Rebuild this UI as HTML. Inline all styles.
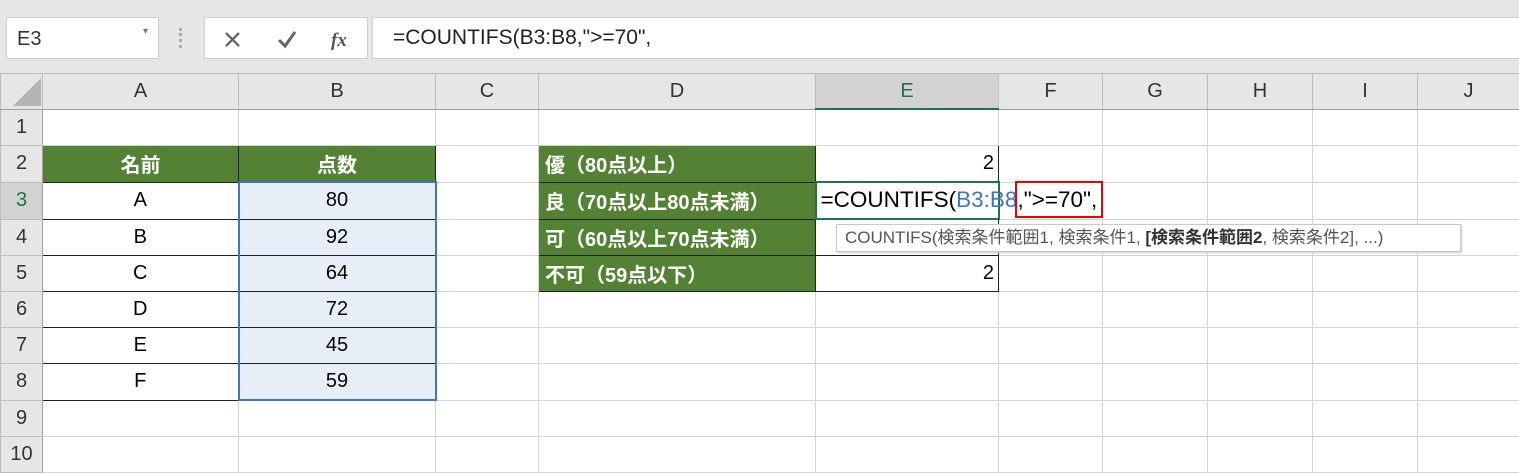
<!DOCTYPE html>
<html><head><meta charset="utf-8"><style>
body{margin:0;width:1519px;height:470px;overflow:hidden;background:#fff;font-family:"Liberation Sans","Noto Sans CJK JP",sans-serif;position:relative}
.tb{position:absolute;left:0;top:0;width:1519px;height:74px;background:#e6e6e6}
.box{position:absolute;background:#fff;border:1px solid #d0d0d0;box-sizing:border-box}
table{position:absolute;left:0;top:73px;border-collapse:collapse;table-layout:fixed;width:1519px}
td{border:1px solid #d4d4d4;height:35px;padding:0;font-size:20px;text-align:center;overflow:visible;white-space:nowrap;position:relative}
tr.h td{background:#e6e6e6;color:#333;border-color:#bdbdbd;border-bottom:1px solid #a0a0a0;height:34px}
td.r{background:#e6e6e6;color:#333;border-color:#bdbdbd;border-right:1px solid #a0a0a0}
.g{background:#548235;color:#fff;font-weight:bold;border:1px solid #222}
.gl{text-align:left;padding-left:6px}
.bl{border:1px solid #222}
.s{background:#e8eef8;border-left:2px solid #4472c4;border-right:2px solid #4472c4;border-bottom:1px solid #222}
</style></head><body>
<div class="tb"></div>
<div class="box" style="left:6px;top:17px;width:153px;height:42px;font-size:20px;color:#333;padding:10px 0 0 10px">E3<span style="position:absolute;right:10px;top:8px;font-size:10px;color:#777">▾</span></div>
<div style="position:absolute;left:179px;top:28px;width:0;height:20px;border-left:3px dotted #aaa"></div>
<div class="box" style="left:204px;top:17px;width:164px;height:42px">
<svg width="164" height="42" style="position:absolute;left:0;top:0"><path d="M21 15 L34 28 M34 15 L21 28" stroke="#666" stroke-width="2.3"/><path d="M74 22 L80 28 L90 14" stroke="#666" stroke-width="3" fill="none"/><text x="126" y="28" font-family="Liberation Serif" font-style="italic" font-weight="bold" font-size="19" fill="#555">fx</text></svg></div>
<div class="box" style="left:372px;top:17px;width:1160px;height:42px;font-size:21px;color:#222;padding:8px 0 0 20px">=COUNTIFS(B3:B8,"&gt;=70",</div>
<table>
<colgroup><col style="width:42px"><col style="width:196px"><col style="width:197px"><col style="width:103px"><col style="width:277px"><col style="width:183px"><col style="width:104px"><col style="width:105px"><col style="width:105px"><col style="width:105px"><col style="width:102px"></colgroup>
<tr class="h"><td><svg width="30" height="30" style="display:block;margin-left:10px"><path d="M30 2 L30 30 L2 30Z" fill="#b4b4b4"/></svg></td><td>A</td><td>B</td><td>C</td><td>D</td><td style="background:#d2d2d2;border-bottom:2px solid #217346;color:#217346">E</td><td>F</td><td>G</td><td>H</td><td>I</td><td>J</td></tr>
<tr><td class="r">1</td><td></td><td></td><td></td><td></td><td></td><td></td><td></td><td></td><td></td><td></td></tr>
<tr><td class="r">2</td><td class="g">名前</td><td class="g">点数</td><td></td><td class="g gl">優（80点以上）</td><td class="bl" style="text-align:right;padding-right:4px">2</td><td></td><td></td><td></td><td></td><td></td></tr>
<tr><td class="r" style="background:#d2d2d2;color:#217346">3</td><td class="bl">A</td><td class="s" style="border-top:2px solid #4472c4">80</td><td></td><td class="g gl">良（70点以上80点未満）</td><td style="border:2px solid #217346"><span style="position:absolute;left:4px;top:4px;font-size:22.5px;z-index:2">=COUNTIFS(<span style="color:#4472c4">B3:B8</span>,"&gt;=70",</span><span style="position:absolute;left:198px;top:-2px;width:88px;height:37px;border:2px solid #e00;box-sizing:border-box;z-index:3"></span></td><td></td><td></td><td></td><td></td><td></td></tr>
<tr><td class="r">4</td><td class="bl">B</td><td class="s">92</td><td></td><td class="g gl">可（60点以上70点未満）</td><td class="bl"><div style="position:absolute;left:20px;top:4px;width:615px;height:26px;background:#fff;border:1px solid #c8c8c8;box-shadow:1px 1px 2px #ccc;font-size:17px;color:#555;text-align:left;padding-left:8px;line-height:26px;z-index:2">COUNTIFS(検索条件範囲1, 検索条件1, <b style="color:#333">[検索条件範囲2</b>, 検索条件2], ...)</div></td><td></td><td></td><td></td><td></td><td></td></tr>
<tr><td class="r">5</td><td class="bl">C</td><td class="s">64</td><td></td><td class="g gl">不可（59点以下）</td><td class="bl" style="text-align:right;padding-right:4px">2</td><td></td><td></td><td></td><td></td><td></td></tr>
<tr><td class="r">6</td><td class="bl">D</td><td class="s">72</td><td></td><td></td><td></td><td></td><td></td><td></td><td></td><td></td></tr>
<tr><td class="r">7</td><td class="bl">E</td><td class="s">45</td><td></td><td></td><td></td><td></td><td></td><td></td><td></td><td></td></tr>
<tr><td class="r">8</td><td class="bl">F</td><td class="s" style="border-bottom:2px solid #4472c4">59</td><td></td><td></td><td></td><td></td><td></td><td></td><td></td><td></td></tr>
<tr><td class="r">9</td><td></td><td></td><td></td><td></td><td></td><td></td><td></td><td></td><td></td><td></td></tr>
<tr><td class="r">10</td><td></td><td></td><td></td><td></td><td></td><td></td><td></td><td></td><td></td><td></td></tr>
</table>
</body></html>
